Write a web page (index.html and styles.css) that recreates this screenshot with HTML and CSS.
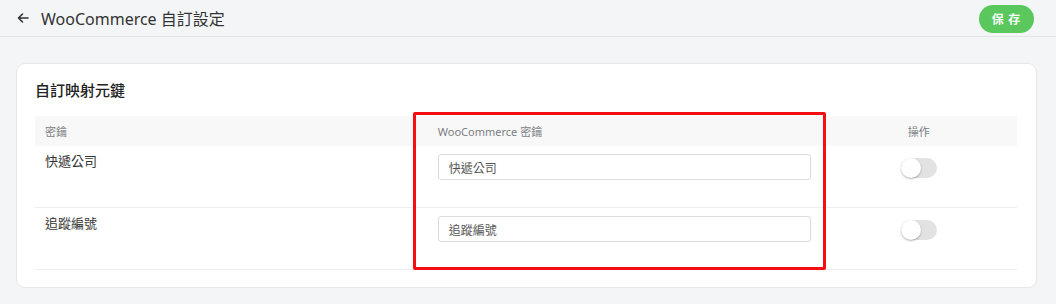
FILE: index.html
```html
<!DOCTYPE html>
<html lang="zh-Hant">
<head>
<meta charset="UTF-8">
<meta name="viewport" content="width=device-width, initial-scale=1.0">
<title>WooCommerce 自訂設定</title>
<link rel="stylesheet" href="styles.css">
</head>
<body>

<div class="topbar">
    <div class="topbar-left">
        <svg class="back" width="12" height="12" viewBox="0 0 12 12" fill="none" stroke="#333" stroke-width="1.6" stroke-linecap="round" stroke-linejoin="round">
            <path d="M11 6H1.5M5.5 2L1.5 6l4 4"/>
        </svg>
        <span class="title">WooCommerce 自訂設定</span>
    </div>
    <button class="save">保 存</button>
</div>

<div class="content">
    <div class="card">
        <div class="card-title">自訂映射元鍵</div>
        <div class="table-wrap">
            <table class="map-table">
                <thead>
                    <tr>
                        <th class="col-key">密鑰</th>
                        <th class="col-woo">WooCommerce 密鑰</th>
                        <th class="col-op">操作</th>
                    </tr>
                </thead>
                <tbody>
                    <tr>
                        <td class="key-name">快遞公司</td>
                        <td><input class="field" type="text" value="快遞公司"></td>
                        <td class="op"><span class="toggle"><span class="knob"></span></span></td>
                    </tr>
                    <tr>
                        <td class="key-name">追蹤編號</td>
                        <td><input class="field" type="text" value="追蹤編號"></td>
                        <td class="op"><span class="toggle"><span class="knob"></span></span></td>
                    </tr>
                </tbody>
            </table>
            <div class="highlight"></div>
        </div>
    </div>
</div>

</body>
</html>
```

FILE: styles.css
```css
body {
    margin: 0;
    background: #f4f5f7;
    font-family: "Noto Sans", "Noto Sans CJK TC", sans-serif;
    color: #333;
}
.topbar {
    height: 36px;
    display: flex;
    align-items: center;
    justify-content: space-between;
    padding: 0 22px 0 17px;
    border-bottom: 1px solid #e3e4e6;
}
.topbar-left {
    display: flex;
    align-items: center;
}
.back {
    margin-right: 12px;
}
.title {
    font-size: 16px;
    color: #333;
}
.save {
    width: 55px;
    height: 28px;
    border: none;
    border-radius: 14px;
    background: #5ac85c;
    color: #fff;
    font-family: "Noto Sans CJK TC", sans-serif;
    font-size: 12px;
    font-weight: bold;
    letter-spacing: 1px;
    margin-top: 1px;
}
.content {
    padding: 26px 19px 0 16px;
}
.card {
    background: #fff;
    border: 1px solid #e6e7ea;
    border-radius: 9px;
    padding: 15px 19px 17px 18px;
}
.card-title {
    font-size: 15px;
    font-weight: 500;
    line-height: 22px;
    color: #222;
    margin-bottom: 15px;
}
.table-wrap {
    position: relative;
}
.map-table {
    width: 100%;
    border-collapse: collapse;
    table-layout: fixed;
}
.map-table th,
.map-table td {
    box-sizing: border-box;
}
.map-table th {
    background: #f8f8f8;
    height: 30px;
    padding: 0 10px;
    font-size: 11px;
    font-weight: normal;
    color: #7b7f85;
    text-align: left;
}
.col-key, .col-woo {
    width: 40%;
}
.map-table th.col-op {
    text-align: center;
}
.map-table td {
    padding: 8px 10px 27px 10px;
    vertical-align: top;
    border-bottom: 1px solid #eeeeee;
}
.map-table td.key-name {
    padding-top: 6px;
    font-size: 13px;
    line-height: 18px;
    color: #333;
}
.field {
    box-sizing: border-box;
    width: 100%;
    height: 26px;
    border: 1px solid #dcdcdc;
    border-radius: 3px;
    padding: 0 10px;
    font-family: "Noto Sans CJK TC", sans-serif;
    font-size: 12px;
    color: #555;
    outline: none;
    display: block;
}
.toggle {
    display: block;
    position: relative;
    width: 36px;
    height: 20px;
    border-radius: 10px;
    background: #e2e2e2;
    margin: 4px auto 0;
}
.knob {
    position: absolute;
    left: 0;
    top: 0;
    width: 20px;
    height: 20px;
    border-radius: 50%;
    background: #fff;
    box-shadow: 0 1px 2px rgba(0, 0, 0, 0.3);
}
.highlight {
    position: absolute;
    left: 378px;
    top: -4px;
    width: 407px;
    height: 152px;
    border: 3px solid #f50f12;
    border-radius: 2px;
    pointer-events: none;
}
```
